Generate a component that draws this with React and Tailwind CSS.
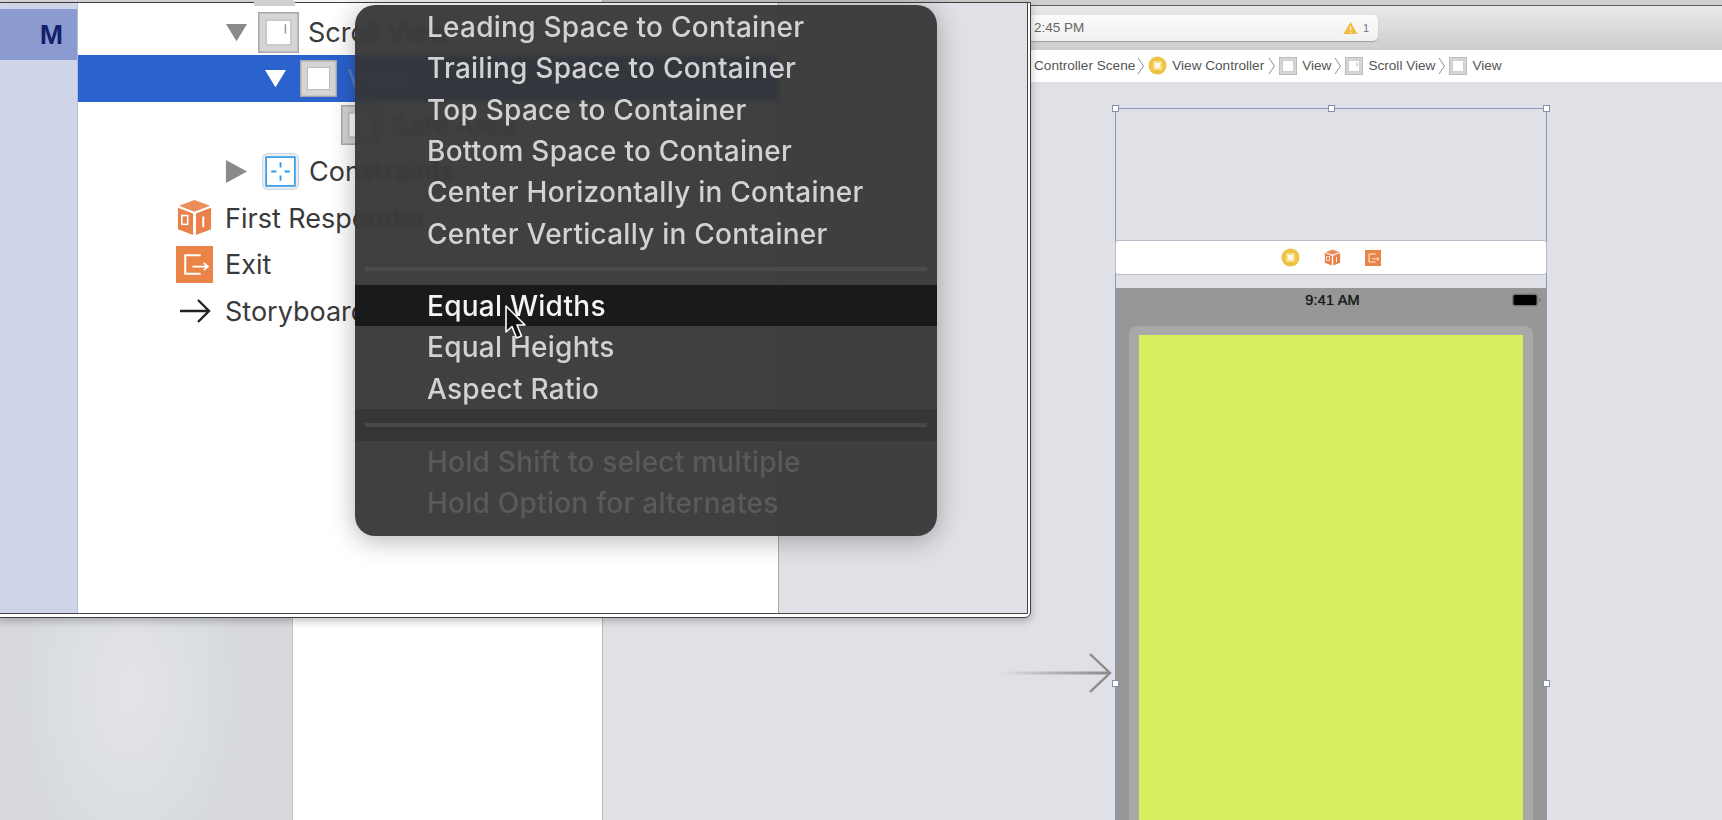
const SANS = 'font-["Liberation_Sans",Arial,sans-serif]';
const INTER = 'font-["Inter","Liberation_Sans",sans-serif]';

function ViewIcon({ className, scroll }) {
  return (
    <svg viewBox="0 0 40 40" className={className}>
      <rect x="0.75" y="0.75" width="38.5" height="38.5" fill="#d5d5d5" stroke="#a9a9a9" strokeWidth="1.5" />
      <rect x="8" y="8" width="24" height="24" fill="#fff" stroke="#b5b5b5" strokeWidth="1" />
      {scroll && <rect x="26" y="12" width="1.5" height="9" fill="#999" />}
    </svg>
  );
}

function Cube({ className }) {
  return (
    <svg viewBox="0 0 38 38" className={className}>
      <path d="M19 1 35 7 19 13 3 7Z" fill="#ea8e5b" />
      <path d="M2 9 17.5 15V37L2 31Z" fill="#e8814a" />
      <path d="M36 9 20.5 15V37L36 31Z" fill="#e8814a" />
      <rect x="6" y="17" width="6" height="9" fill="none" stroke="#fff" strokeWidth="1.6" />
      <path d="M28 18V29" stroke="#fff" strokeWidth="2" />
    </svg>
  );
}

function ExitIcon({ className }) {
  return (
    <svg viewBox="0 0 36 36" className={className}>
      <rect width="36" height="36" fill="#eb8447" />
      <path d="M24 9H9V27H24" fill="none" stroke="#fff" strokeWidth="2" />
      <path d="M16 20H31M27 16.5 31 20 27 23.5" fill="none" stroke="#fff" strokeWidth="1.8" />
    </svg>
  );
}

function Target({ className }) {
  return (
    <svg viewBox="0 0 20 20" className={className}>
      <circle cx="10" cy="10" r="9.5" fill="#efc445" />
      <rect x="5.5" y="5.5" width="9" height="9" fill="#f8e39a" />
      <rect x="7.5" y="7.5" width="5" height="5" fill="#fffbe6" />
    </svg>
  );
}

function Chevron({ className = "" }) {
  return (
    <svg viewBox="0 0 8 18" className={`h-[18px] w-[8px] shrink-0 ${className}`}>
      <path d="M1 1 6.5 9 1 17" fill="none" stroke="#8d8d8d" strokeWidth="1" />
    </svg>
  );
}

function Triangle({ dir, color, className }) {
  return (
    <svg viewBox="0 0 24 24" className={className}>
      {dir === "down" ? <path d="M1 3H23L12 21Z" fill={color} /> : <path d="M1 0V24L23 12Z" fill={color} />}
    </svg>
  );
}

function Row({ pl, children, className = "" }) {
  return (
    <div className={`flex h-[46.4px] items-center ${className}`} style={{ paddingLeft: pl }}>
      {children}
    </div>
  );
}

function TreeLabel({ children, className = "text-[#3a3a3a]" }) {
  return <span className={`whitespace-nowrap pt-[1px] text-[27px] leading-none ${className}`}>{children}</span>;
}

function Tree() {
  return (
    <div className={`flex flex-col ${INTER}`}>
      <Row pl={147}>
        <Triangle dir="down" color="#8a8a8a" className="mr-[10px] h-[23px] w-[23px]" />
        <ViewIcon scroll className="mr-[9px] h-[41px] w-[41px]" />
        <TreeLabel>Scroll View</TreeLabel>
      </Row>
      <Row pl={186} className="bg-[#2a62ce]">
        <Triangle dir="down" color="#ffffff" className="mr-[13px] h-[23px] w-[23px]" />
        <ViewIcon className="mr-[10px] h-[37px] w-[37px]" />
        <TreeLabel className="text-[#5d7fc4]">View</TreeLabel>
      </Row>
      <Row pl={263}>
        <ViewIcon className="mr-[10px] h-[40px] w-[40px]" />
        <TreeLabel className="text-[#555]">Safe Area</TreeLabel>
      </Row>
      <Row pl={147}>
        <Triangle dir="right" color="#8a8a8a" className="mr-[14px] h-[23px] w-[23px]" />
        <svg viewBox="0 0 36 36" className="mr-[10px] h-[37px] w-[37px]">
          <rect x="0.5" y="0.5" width="35" height="35" rx="5" fill="#e9eef3" stroke="#cfd5da" />
          <rect x="4" y="4" width="28" height="28" fill="#fff" stroke="#2f9be8" strokeWidth="1.6" />
          <path d="M18 9V14M18 22V27M9 18H14M22 18H27" stroke="#2f9be8" strokeWidth="1.8" />
        </svg>
        <TreeLabel>Constraints</TreeLabel>
      </Row>
      <Row pl={98}>
        <Cube className="mr-[12px] h-[37px] w-[37px]" />
        <TreeLabel>First Responder</TreeLabel>
      </Row>
      <Row pl={98}>
        <ExitIcon className="mr-[12px] h-[37px] w-[37px]" />
        <TreeLabel>Exit</TreeLabel>
      </Row>
      <Row pl={98}>
        <svg viewBox="0 0 37 26" className="mr-[12px] h-[26px] w-[37px]">
          <path d="M4 13H33M22 2 33 13 22 24" fill="none" stroke="#222" strokeWidth="2.4" />
        </svg>
        <TreeLabel>Storyboard Entry</TreeLabel>
      </Row>
    </div>
  );
}

function MenuItem({ children, active, muted }) {
  return (
    <div
      className={`flex h-[41.3px] items-center whitespace-nowrap pl-[72px] pt-[1px] text-[28px] font-medium leading-none tracking-[0.25px] ${
        active ? "bg-[#1a1a1a] text-[#f4f4f4]" : muted ? "text-[#5a5a5a]" : "text-[#d2d2d2]"
      }`}
    >
      {children}
    </div>
  );
}

function Menu() {
  return (
    <div
      className={`absolute left-[355px] top-[5px] w-[582px] h-[531px] overflow-hidden rounded-[20px] bg-[rgba(52,52,52,0.94)] pt-[1px] shadow-[0_4px_26px_rgba(0,0,0,0.3)] backdrop-blur-[2px] ${INTER}`}
    >
      <MenuItem>Leading Space to Container</MenuItem>
      <MenuItem>Trailing Space to Container</MenuItem>
      <MenuItem>Top Space to Container</MenuItem>
      <MenuItem>Bottom Space to Container</MenuItem>
      <MenuItem>Center Horizontally in Container</MenuItem>
      <MenuItem>Center Vertically in Container</MenuItem>
      <div className="flex h-[31px] items-center px-[10px]">
        <div className="h-[4px] w-full bg-[#4b4b4b]" />
      </div>
      <MenuItem active>Equal Widths</MenuItem>
      <MenuItem>Equal Heights</MenuItem>
      <MenuItem>Aspect Ratio</MenuItem>
      <div className="flex h-[32px] items-center bg-[#363636] px-[10px]">
        <div className="h-[4px] w-full bg-[#484848]" />
      </div>
      <MenuItem muted>Hold Shift to select multiple</MenuItem>
      <MenuItem muted>Hold Option for alternates</MenuItem>
    </div>
  );
}

function Cursor() {
  return (
    <svg viewBox="0 0 22 36" className="absolute left-[504px] top-[305px] h-[36px] w-[22px]">
      <path d="M2 1V27L8 21.5 12.5 33 17.5 31 13 20H21Z" fill="#111" stroke="#fff" strokeWidth="1.6" strokeLinejoin="round" />
    </svg>
  );
}

function ZoomWindow() {
  return (
    <div className="absolute left-[-4px] top-[2px] h-[616px] w-[1035px] rounded-br-[6px] border-[1.5px] border-[#3f3f3f] bg-white pb-[3px] pr-[2px] shadow-[0_3px_8px_rgba(0,0,0,0.25)]">
      <div className="flex h-full overflow-hidden border-b-[1.5px] border-r-[1.5px] border-[#444]">
        <div className="flex w-[81px] shrink-0 flex-col border-r border-[#b8bdd6] bg-[#cfd4e9]">
          <div className={`mt-[6px] flex h-[51px] items-center justify-end bg-[#8c9ad2] pr-[14px] text-[28px] font-bold text-[#13206b] ${SANS}`}>
            M
          </div>
        </div>
        <div className="w-[701px] shrink-0 overflow-hidden border-r border-[#a9a9a9] bg-white pt-[6px]">
          <Tree />
        </div>
        <div className="flex-1 bg-[#e0e1e6]" />
      </div>
      <div className="absolute left-[257px] top-[-2px] h-[5px] w-[41px] bg-[#cfcfcf]" />
    </div>
  );
}

function Handle({ className }) {
  return <div className={`absolute h-[7px] w-[7px] border border-[#8a8fa8] bg-white ${className}`} />;
}

function Crumb({ icon, label }) {
  return (
    <div className="flex items-center gap-[5px]">
      {icon}
      <span className="pt-[1px]">{label}</span>
    </div>
  );
}

function RightPane() {
  return (
    <div className={`flex min-w-0 flex-1 flex-col ${SANS}`}>
      <div className="h-[5px] bg-[#cfcfd0]" />
      <div className="h-[1px] bg-[#5f5f60]" />
      <div className="flex h-[44px] items-start bg-gradient-to-b from-[#e9e8ea] to-[#cdcdce] pl-[397px] pt-[9px]">
        <div className="flex h-[26px] w-[378px] items-center justify-between rounded-r-[5px] bg-gradient-to-b from-[#fbfbfb] to-[#f0f0f0] pl-[34px] pr-[9px] text-[13.5px] text-[#666] shadow-[0_1px_1px_rgba(0,0,0,0.25)]">
          <span>2:45 PM</span>
          <div className="flex items-center gap-[5px]">
            <svg viewBox="0 0 16 14" className="h-[14px] w-[15px]">
              <path d="M8 0.5 15.5 13.5H0.5Z" fill="#f0bb3e" />
              <path d="M8 5V9.5M8 11V12.3" stroke="#fff" strokeWidth="1.4" />
            </svg>
            <span className="text-[11px] text-[#777]">1</span>
          </div>
        </div>
      </div>
      <div className="flex h-[32px] items-center gap-[3px] bg-white pl-[431px] text-[13.6px] text-[#555]">
        <span className="mr-[-1px] pt-[1px]">Controller Scene</span>
        <Chevron />
        <Crumb icon={<Target className="h-[19px] w-[19px]" />} label="View Controller" />
        <Chevron className="ml-[1px]" />
        <Crumb icon={<ViewIcon className="h-[18px] w-[18px]" />} label="View" />
        <Chevron />
        <Crumb icon={<ViewIcon scroll className="h-[18px] w-[18px]" />} label="Scroll View" />
        <Chevron />
        <Crumb icon={<ViewIcon className="h-[18px] w-[18px]" />} label="View" />
      </div>
      <div className="relative flex-1 overflow-hidden bg-[#e0e1e6] pl-[512px] pt-[26px]">
        <svg viewBox="0 0 114 40" className="absolute left-[395px] top-[571px] h-[40px] w-[114px]">
          <defs>
            <linearGradient id="tail" x1="0" x2="1" y1="0" y2="0">
              <stop offset="0" stopColor="#8a8a8a" stopOpacity="0" />
              <stop offset="1" stopColor="#8a8a8a" />
            </linearGradient>
          </defs>
          <rect x="0" y="18.5" width="110" height="3" fill="url(#tail)" />
          <path d="M92 1 112 20 92 39" fill="none" stroke="#8a8a8a" strokeWidth="2.4" />
        </svg>
        <div className="relative h-[1150px] w-[432px] border-x border-t border-[#8e94c4] pt-[131px]">
          <div className="mx-[-1px] flex h-[35px] items-center justify-center gap-[24px] rounded-[3px] border border-[#b9bcc8] bg-white">
            <Target className="h-[19px] w-[19px]" />
            <Cube className="h-[17px] w-[17px]" />
            <ExitIcon className="h-[16px] w-[16px]" />
          </div>
          <div className="relative mt-[13px] h-[1000px] bg-[#979797] px-[13px] pt-[38px]">
            <div className="absolute left-0 top-[2px] w-full pl-[3px] text-center text-[14.5px] tracking-[0.2px] text-[#1d1d1d] [text-shadow:0_0_0.7px_#1d1d1d]">
              9:41 AM
            </div>
            <svg viewBox="0 0 30 14" className="absolute right-[4px] top-[5px] h-[14px] w-[31px]">
              <rect x="0.5" y="0.5" width="26" height="13" rx="3" fill="#777" />
              <rect x="2" y="2" width="23" height="10" rx="1.5" fill="#000" />
              <rect x="27.5" y="5" width="1.5" height="4" fill="#777" />
            </svg>
            <div className="rounded-t-[8px] bg-[#a8a8a8] px-[10px] pt-[9px]">
              <div className="h-[600px] bg-[#d5ef5e]" />
            </div>
          </div>
          <Handle className="left-[-4px] top-[-4px]" />
          <Handle className="left-[212px] top-[-4px]" />
          <Handle className="right-[-4px] top-[-4px]" />
          <Handle className="left-[-4px] top-[571px]" />
          <Handle className="right-[-4px] top-[571px]" />
        </div>
      </div>
    </div>
  );
}

export default function App() {
  return (
    <div className="relative flex h-[820px] w-[1722px] overflow-hidden bg-[#e0e1e6] blur-[0.6px]">
      <div className="w-[293px] shrink-0 border-r border-[#c4c6ca] bg-[#d9dce1] bg-[radial-gradient(ellipse_110px_190px_at_130px_690px,#e3e4e8,#dadde2_70%,#d7d9dd)]" />
      <div className="w-[310px] shrink-0 border-r border-[#b5b5b5] bg-white" />
      <RightPane />
      <ZoomWindow />
      <Menu />
      <Cursor />
    </div>
  );
}
